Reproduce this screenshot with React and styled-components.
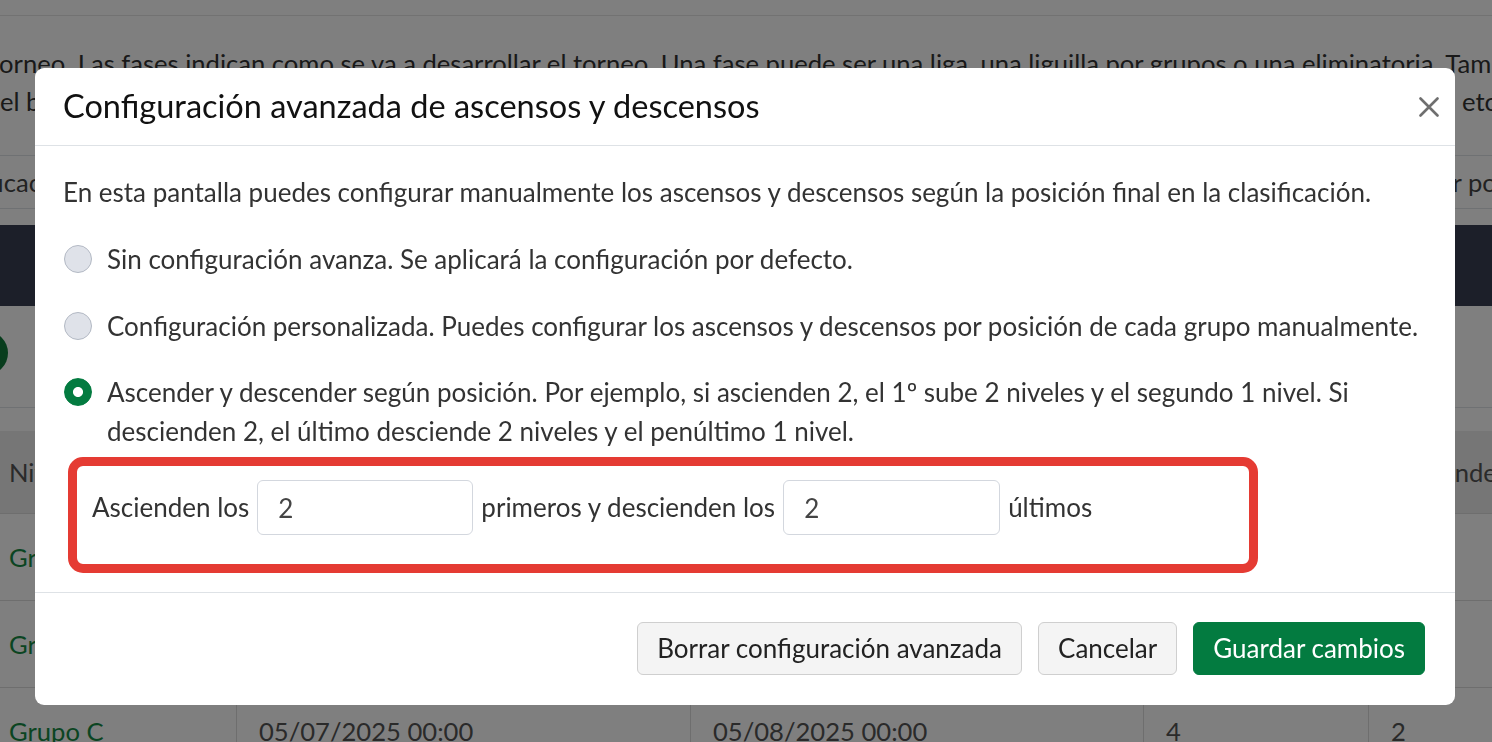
import React from "react";
import styled, { createGlobalStyle } from "styled-components";

const GlobalStyle = createGlobalStyle`
  * { box-sizing: border-box; }
  html, body { margin: 0; padding: 0; overflow: hidden; }
  body {
    font-family: Lato, "Open Sans", sans-serif;
    font-size: 26px;
    line-height: 38.4px;
    color: #333;
    background: #fff;
  }
`;

/* fondo: la página que queda detrás del modal */

const Page = styled.div`
  height: 742px;
  overflow: hidden;
  background: #fff;
  font-size: 25.6px;
`;

const TopBar = styled.div`
  height: 16px;
  border-bottom: 1px solid #e4e4e4;
`;

const Intro = styled.div`
  margin-top: 28px;
  color: #333;
`;

const IntroLine = styled.div`
  white-space: nowrap;
  overflow: hidden;
  margin-left: -10px;
`;

const SplitLine = styled.div`
  display: grid;
  grid-template-columns: 1462px auto;
  white-space: nowrap;
  overflow: hidden;

  span { overflow: hidden; }
`;

const FilterRow = styled.div`
  margin-top: 34px;
  height: 54px;
  border-top: 1px solid #dee2e6;
  border-bottom: 1px solid #dee2e6;
  display: grid;
  grid-template-columns: 1462px auto;
  align-items: center;
  white-space: nowrap;
  overflow: hidden;
  color: #444;
`;

const ShiftedText = styled.span`
  margin-left: ${(props) => props.shift}px;
`;

const NavBand = styled.div`
  margin-top: 16px;
  height: 81px;
  background: #383e52;
`;

const ActionArea = styled.div`
  height: 102px;
  border-bottom: 1px solid #dee2e6;
  display: flex;
  align-items: center;
`;

const RoundButton = styled.div`
  width: 44px;
  height: 44px;
  border-radius: 50%;
  margin-left: -36px;
  margin-top: -6px;
  background: #117a3a;
`;

const Table = styled.div`
  margin-top: 23px;
  margin-left: -14px;
  display: grid;
  grid-template-columns: 250px 454px 453px 225px 300px;
  width: 1700px;
`;

const Cell = styled.div`
  height: ${(props) => (props.head ? 83 : 87)}px;
  padding: 0 ${(props) => props.pad ?? 22}px;
  display: flex;
  align-items: center;
  white-space: nowrap;
  overflow: hidden;
  background: ${(props) => (props.head ? "#ececec" : "#fff")};
  border-bottom: 1px solid #dcdcdc;
  border-left: 1px solid #dcdcdc;
  color: ${(props) => (props.link ? "#178a45" : "#555")};
`;

/* modal */

const Backdrop = styled.div`
  position: fixed;
  inset: 0;
  background: rgba(0, 0, 0, 0.5);
`;

const Dialog = styled.div`
  width: 1420px;
  margin: 68px 0 0 35px;
  background: #fff;
  border-radius: 9px;
  overflow: hidden;
`;

const Header = styled.div`
  height: 78px;
  padding: 0 8px 0 28px;
  display: flex;
  align-items: center;
  justify-content: space-between;
  border-bottom: 1px solid #dee2e6;
`;

const Title = styled.h5`
  margin: 0;
  font-size: 32.5px;
  font-weight: 400;
  line-height: 1.5;
  color: #111;
`;

const CloseButton = styled.button`
  width: 36px;
  height: 36px;
  padding: 0;
  border: 0;
  background: transparent;
  display: flex;
  align-items: center;
  justify-content: center;
  cursor: pointer;
`;

const Body = styled.div`
  padding: 27px 28px 19px;
`;

const Lead = styled.p`
  margin: 0 0 29px;
`;

const Options = styled.div`
  display: flex;
  flex-direction: column;
  gap: 28px;
`;

const Option = styled.label`
  display: flex;
  align-items: flex-start;
  gap: 15px;
  cursor: pointer;
`;

const Radio = styled.input.attrs({ type: "radio" })`
  appearance: none;
  flex: none;
  width: 28px;
  height: 28px;
  margin: 5px 0 0 1px;
  border-radius: 50%;
  border: 1px solid #b3b9c4;
  background: #dfe2e9;

  &:checked {
    border-color: #037b40;
    background: radial-gradient(circle, #fff 0 4.6px, #037b40 5.4px);
  }
`;

const Highlight = styled.div`
  margin: 7px 0 0 5px;
  width: 1190px;
  border: 9px solid #e53b33;
  border-radius: 15px;
  padding: 14px 15px 29px;
`;

const InlineForm = styled.div`
  display: flex;
  align-items: center;
  gap: 8px;
`;

const NumberInput = styled.input`
  width: ${(props) => props.w}px;
  height: 55px;
  padding: 0 20px;
  border: 1px solid #d3d7de;
  border-radius: 6px;
  font: inherit;
  color: #444;
  outline: none;
`;

const Footer = styled.div`
  border-top: 1px solid #dee2e6;
  padding: 29px 30px 30px;
  display: flex;
  justify-content: flex-end;
  gap: 16px;
`;

const Button = styled.button`
  height: 53px;
  padding: 0 19px;
  border-radius: 6px;
  font: inherit;
  border: 1px solid ${(props) => (props.primary ? "#037b40" : "#cfcfcf")};
  background: ${(props) => (props.primary ? "#037b40" : "#f4f4f4")};
  color: ${(props) => (props.primary ? "#fff" : "#222")};
  cursor: pointer;
`;

const rows = [
  ["Grupo A", "05/07/2025 00:00", "05/08/2025 00:00", "4", "2"],
  ["Grupo B", "05/07/2025 00:00", "05/08/2025 00:00", "4", "2"],
  ["Grupo C", "05/07/2025 00:00", "05/08/2025 00:00", "4", "2"],
];

function Background() {
  return (
    <Page>
      <TopBar />
      <Intro>
        <IntroLine>
          torneo. Las fases indican como se va a desarrollar el torneo. Una fase puede ser una liga, una liguilla por grupos o una eliminatoria. También
        </IntroLine>
        <SplitLine>
          <span>el bombo de equipos que participan en cada fase, los grupos, los niveles, etc.</span>
          <span>etc. Cada fase</span>
        </SplitLine>
      </Intro>
      <FilterRow>
        <ShiftedText shift={-64}>Clasificación</ShiftedText>
        <ShiftedText shift={-76}>Buscar por nombre</ShiftedText>
      </FilterRow>
      <NavBand />
      <ActionArea>
        <RoundButton />
      </ActionArea>
      <Table>
        <Cell head>Nivel</Cell>
        <Cell head>Fecha inicio</Cell>
        <Cell head>Fecha fin</Cell>
        <Cell head>Ascienden</Cell>
        <Cell head pad={10}>Descienden</Cell>
        {rows.map((r) =>
          r.map((v, i) => (
            <Cell key={r[0] + i} link={i === 0}>
              {v}
            </Cell>
          ))
        )}
      </Table>
    </Page>
  );
}

function App() {
  return (
    <>
      <GlobalStyle />
      <Background />
      <Backdrop>
        <Dialog>
          <Header>
            <Title>Configuración avanzada de ascensos y descensos</Title>
            <CloseButton aria-label="Cerrar">
              <svg width="20" height="20" viewBox="0 0 20 20">
                <path d="M1.5 1.5l17 17M18.5 1.5l-17 17" stroke="#6f6f6f" strokeWidth="2.6" strokeLinecap="round" />
              </svg>
            </CloseButton>
          </Header>
          <Body>
            <Lead>
              En esta pantalla puedes configurar manualmente los ascensos y descensos según la posición final en la clasificación.
            </Lead>
            <Options>
              <Option>
                <Radio name="modo" />
                <span>Sin configuración avanza. Se aplicará la configuración por defecto.</span>
              </Option>
              <Option>
                <Radio name="modo" />
                <span>Configuración personalizada. Puedes configurar los ascensos y descensos por posición de cada grupo manualmente.</span>
              </Option>
              <Option>
                <Radio name="modo" defaultChecked />
                <span>
                  Ascender y descender según posición. Por ejemplo, si ascienden 2, el 1º sube 2 niveles y el segundo 1 nivel. Si descienden 2, el último desciende 2 niveles y el penúltimo 1 nivel.
                </span>
              </Option>
            </Options>
            <Highlight>
              <InlineForm>
                <span>Ascienden los</span>
                <NumberInput w={216} defaultValue="2" />
                <span>primeros y descienden los</span>
                <NumberInput w={217} defaultValue="2" />
                <span>últimos</span>
              </InlineForm>
            </Highlight>
          </Body>
          <Footer>
            <Button>Borrar configuración avanzada</Button>
            <Button>Cancelar</Button>
            <Button primary>Guardar cambios</Button>
          </Footer>
        </Dialog>
      </Backdrop>
    </>
  );
}

export default App;
